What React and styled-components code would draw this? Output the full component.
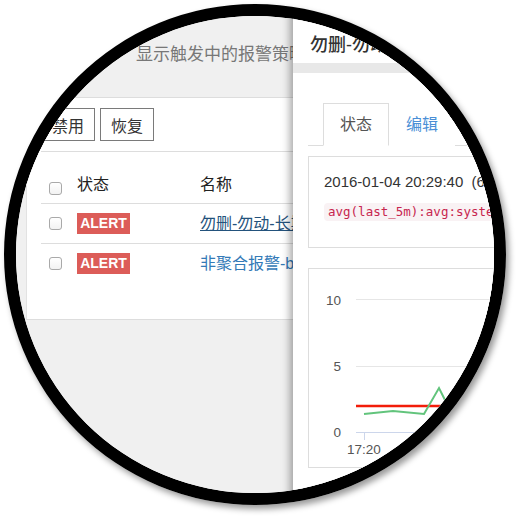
import React from 'react';
import styled, { createGlobalStyle } from 'styled-components';

const GlobalStyle = createGlobalStyle`
  html, body {
    margin: 0;
    padding: 0;
    background: #fff;
  }
  body {
    font-family: "Liberation Sans", "Noto Sans CJK SC", sans-serif;
    color: #333;
  }
`;

const Frame = styled.div`
  width: 516px;
  height: 516px;
  padding: 4px;
  box-sizing: border-box;
`;

const Lens = styled.div`
  position: relative;
  width: 502px;
  height: 501px;
  box-sizing: border-box;
  border: 12px solid #000;
  border-radius: 50%;
  overflow: hidden;
  box-shadow: 3px 4px 6px rgba(0, 0, 0, 0.4);
`;

const Scene = styled.div`
  position: relative;
  width: 516px;
  height: 516px;
  margin: -16px 0 0 -16px;
  background: #f0f0f0;
`;

const PageHeader = styled.div`
  height: 98px;
  box-sizing: border-box;
  padding: 43px 0 0 136px;
  border-bottom: 1px solid #ddd;
  font-size: 17px;
  line-height: 24px;
  color: #777;
  white-space: nowrap;
`;

const Panel = styled.div`
  height: 222px;
  box-sizing: border-box;
  margin-left: 26px;
  padding-left: 14px;
  background: #fff;
  border-left: 1px solid #e2e2e2;
  border-bottom: 1px solid #ddd;
`;

const Toolbar = styled.div`
  display: flex;
  gap: 5px;
  padding: 10px 0 10px 0;
  border-bottom: 1px solid #ddd;
`;

const Button = styled.button`
  width: 54px;
  height: 33px;
  padding: 0;
  border: 1px solid #7a7a7a;
  background: #fff;
  font-family: "Liberation Sans", "Noto Sans CJK SC", sans-serif;
  font-size: 16px;
  color: #333;
`;

const Table = styled.table`
  border-collapse: collapse;
  width: 475px;
  font-size: 16px;
`;

const HeadCell = styled.th`
  height: 43px;
  padding: 0 0 8px 0;
  vertical-align: bottom;
  text-align: left;
  font-weight: normal;
  line-height: 20px;
  color: #222;
  width: ${({ $w }) => ($w ? `${$w}px` : 'auto')};
  border-bottom: 1px solid #ddd;
`;

const Cell = styled.td`
  height: 39px;
  padding: 0;
  vertical-align: middle;
  line-height: 20px;
  border-bottom: ${({ $last }) => ($last ? 'none' : '1px solid #ddd')};
  white-space: nowrap;
`;

const Check = styled.span`
  display: block;
  width: 11px;
  height: 11px;
  margin-left: 8px;
  border: 1px solid #a9a9a9;
  border-radius: 3px;
  background: linear-gradient(#fff, #f2f2f2);
`;

const Badge = styled.span`
  display: block;
  width: 53px;
  height: 21px;
  background: #dc5c58;
  color: #fff;
  font-family: "Liberation Sans", sans-serif;
  font-weight: bold;
  font-size: 14px;
  line-height: 21px;
  text-align: center;
`;

const NameLink = styled.a`
  color: ${({ $visited }) => ($visited ? '#23527c' : '#337ab7')};
  text-decoration: ${({ $visited }) => ($visited ? 'underline' : 'none')};
`;

const Drawer = styled.div`
  position: absolute;
  left: 293px;
  top: 0;
  right: 0;
  bottom: 0;
  background: #fff;
  box-shadow: -3px 0 8px rgba(0, 0, 0, 0.35);
`;

const DrawerHeader = styled.div`
  height: 73px;
  box-sizing: border-box;
  padding: 33px 0 0 17px;
  border-bottom: 10px solid #e8e8e8;
  font-size: 18px;
  line-height: 24px;
  font-weight: 500;
  color: #333;
  white-space: nowrap;
`;

const DrawerBody = styled.div`
  padding: 30px 0 0 15px;
`;

const Tabs = styled.div`
  display: flex;
  padding-left: 15px;
  border-bottom: 1px solid #ddd;
`;

const Tab = styled.div`
  height: 43px;
  box-sizing: border-box;
  padding: 0 16px;
  margin-bottom: -1px;
  border: 1px solid ${({ $active }) => ($active ? '#ddd' : 'transparent')};
  border-bottom-color: ${({ $active }) => ($active ? '#fff' : 'transparent')};
  background: #fff;
  font-size: 16px;
  line-height: 42px;
  color: ${({ $active }) => ($active ? '#555' : '#4a8fd6')};
`;

const InfoBox = styled.div`
  width: 300px;
  height: 92px;
  box-sizing: border-box;
  margin-top: 10px;
  padding: 15px 0 0 15px;
  border: 1px solid #ddd;
`;

const Stamp = styled.div`
  font-size: 15px;
  line-height: 20px;
  color: #333;
  white-space: pre;
`;

const Code = styled.code`
  display: inline-block;
  margin-top: 11px;
  padding: 0 4px;
  height: 18px;
  border-radius: 4px;
  background: #f9f2f4;
  color: #c7254e;
  font-family: "DejaVu Sans Mono", monospace;
  font-size: 12.5px;
  line-height: 18px;
  white-space: nowrap;
`;

const ChartBox = styled.div`
  width: 300px;
  height: 200px;
  box-sizing: border-box;
  margin-top: 20px;
  border: 1px solid #ddd;
`;

const Axis = styled.text`
  font-family: "Liberation Sans", sans-serif;
  font-size: 13.5px;
  fill: #555;
`;

const Chart = () => (
  <svg width="298" height="198" viewBox="0 0 298 198">
    <line x1="47" y1="30.5" x2="298" y2="30.5" stroke="#e6e6e6" />
    <line x1="47" y1="97.5" x2="298" y2="97.5" stroke="#e6e6e6" />
    <line x1="47" y1="163.5" x2="298" y2="163.5" stroke="#ccd6eb" />
    <line x1="55.5" y1="163" x2="55.5" y2="171" stroke="#ccd6eb" />
    <Axis x="32" y="36" textAnchor="end">10</Axis>
    <Axis x="32" y="102" textAnchor="end">5</Axis>
    <Axis x="32" y="168" textAnchor="end">0</Axis>
    <Axis x="55" y="185" textAnchor="middle">17:20</Axis>
    <line x1="47" y1="137" x2="298" y2="137" stroke="#f21d0a" strokeWidth="2.5" />
    <polyline
      points="55,145 84,142 115,145 130,119 137,133 160,150 190,146"
      fill="none"
      stroke="#62c47c"
      strokeWidth="2"
    />
  </svg>
);

const rows = [
  { name: '勿删-勿动-长期报警测试', visited: true },
  { name: '非聚合报警-by-host', visited: false },
];

export default function App() {
  return (
    <>
      <GlobalStyle />
      <Frame>
        <Lens>
          <Scene>
            <PageHeader>显示触发中的报警策略</PageHeader>
            <Panel>
              <Toolbar>
                <Button>禁用</Button>
                <Button>恢复</Button>
              </Toolbar>
              <Table>
                <thead>
                  <tr>
                    <HeadCell $w={36}>
                      <Check />
                    </HeadCell>
                    <HeadCell $w={123}>状态</HeadCell>
                    <HeadCell>名称</HeadCell>
                  </tr>
                </thead>
                <tbody>
                  {rows.map((row, i) => (
                    <tr key={row.name}>
                      <Cell $last={i === rows.length - 1}>
                        <Check />
                      </Cell>
                      <Cell $last={i === rows.length - 1}>
                        <Badge>ALERT</Badge>
                      </Cell>
                      <Cell $last={i === rows.length - 1}>
                        <NameLink href="#" $visited={row.visited}>
                          {row.name}
                        </NameLink>
                      </Cell>
                    </tr>
                  ))}
                </tbody>
              </Table>
            </Panel>
            <Drawer>
              <DrawerHeader>勿删-勿动-长期报警测试</DrawerHeader>
              <DrawerBody>
                <Tabs>
                  <Tab $active>状态</Tab>
                  <Tab>编辑</Tab>
                </Tabs>
                <InfoBox>
                  <Stamp>2016-01-04 20:29:40  (6 个月前)</Stamp>
                  <Code>avg(last_5m):avg:system.load.1{'{*}'} &gt; 2</Code>
                </InfoBox>
                <ChartBox>
                  <Chart />
                </ChartBox>
              </DrawerBody>
            </Drawer>
          </Scene>
        </Lens>
      </Frame>
    </>
  );
}
